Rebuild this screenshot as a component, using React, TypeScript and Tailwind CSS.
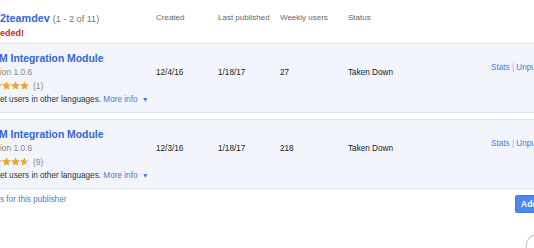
import React from 'react';

type Item = {
  created: string;
  published: string;
  users: string;
  rating: number;
  votes: number;
};

const ITEMS: Item[] = [
  { created: '12/4/16', published: '1/18/17', users: '27', rating: 5, votes: 1 },
  { created: '12/3/16', published: '1/18/17', users: '218', rating: 4.5, votes: 9 },
];

const COLS = 'grid grid-cols-[156px_62px_62px_68px_143px_1fr]';

function Star({ fill }: { fill: number }) {
  const pts = '4.5,0.4 5.7,3.3 8.8,3.5 6.4,5.5 7.2,8.6 4.5,6.9 1.8,8.6 2.6,5.5 0.2,3.5 3.3,3.3';
  return (
    <span className="relative inline-block w-[9px] h-[9px]">
      <svg viewBox="0 0 9 9" className="absolute inset-0 w-[9px] h-[9px]">
        <polygon points={pts} fill="#c9c9c9" />
      </svg>
      <span className="absolute inset-y-0 left-0 overflow-hidden" style={{ width: `${fill * 9}px` }}>
        <svg viewBox="0 0 9 9" className="w-[9px] h-[9px]">
          <polygon points={pts} fill="#f4a21c" />
        </svg>
      </span>
    </span>
  );
}

function Row({ item }: { item: Item }) {
  return (
    <div className={`${COLS} h-[70px] border-y border-[#dbe3f3] bg-[#f2f5fc] text-[8.2px] leading-[12px] text-[#222]`}>
      <div className="pt-[8px] whitespace-nowrap">
        <div className="text-[10.4px] leading-[14px] font-bold text-[#3366d6] -ml-[1px]">M Integration Module</div>
        <div className="text-[8.4px] leading-[13px] text-[#888]">ion 1.0.6</div>
        <div className="flex items-center gap-[4px] h-[13px]">
          <span className="flex -ml-[16px]">
            {[0, 1, 2, 3, 4].map((i) => (
              <Star key={i} fill={Math.max(0, Math.min(1, item.rating - i))} />
            ))}
          </span>
          <span className="text-[8.4px] text-[#888]">({item.votes})</span>
        </div>
        <div className="mt-[1px] leading-[13px] text-[#333]">
          et users in other languages.{' '}
          <span className="text-[#4a78de]">
            More info <span className="text-[7px] ml-[2px]">▼</span>
          </span>
        </div>
      </div>
      <div className="pt-[23px]">{item.created}</div>
      <div className="pt-[23px]">{item.published}</div>
      <div className="pt-[23px]">{item.users}</div>
      <div className="pt-[23px]">Taken Down</div>
      <div className="pt-[18px] whitespace-nowrap text-[#4a78de]">
        Stats <span className="text-[#9bb0e0]">|</span> Unpublish
      </div>
    </div>
  );
}

export default function App() {
  return (
    <div className="relative w-[534px] h-[248px] overflow-hidden bg-white font-['Liberation_Sans',Arial,sans-serif]">
      <div className={`${COLS} h-[43px]`}>
        <div className="pt-[11px] whitespace-nowrap">
          <div className="leading-[12px]">
            <span className="text-[10.8px] font-bold text-[#3366d6]">2teamdev</span>
            <span className="text-[9.1px] text-[#777] ml-[3px]">(1 - 2 of 11)</span>
          </div>
          <div className="mt-[2px] leading-[12px] text-[9px] font-bold text-[#dd2222]">eded!</div>
        </div>
        <div className="pt-[12px] leading-[12px] text-[8px] text-[#666]">Created</div>
        <div className="pt-[12px] leading-[12px] text-[8px] text-[#666] whitespace-nowrap">Last published</div>
        <div className="pt-[12px] leading-[12px] text-[8px] text-[#666] whitespace-nowrap">Weekly users</div>
        <div className="pt-[12px] leading-[12px] text-[8px] text-[#666]">Status</div>
        <div />
      </div>

      <div className="flex flex-col gap-[6px]">
        {ITEMS.map((item, i) => (
          <Row key={i} item={item} />
        ))}
      </div>

      <div className="flex justify-between items-start">
        <div className="pt-[5px] leading-[12px] text-[8.2px] text-[#4a78de] whitespace-nowrap">s for this publisher</div>
        <button className="mt-[6px] h-[18px] w-[40px] -mr-[21px] rounded-[2px] bg-[#4d88f0] border border-[#3f78e0] text-white text-[8.5px] font-bold text-left pl-[5px]">
          Add
        </button>
      </div>

      <svg className="absolute right-0 bottom-0" width="10" height="18" viewBox="0 0 10 18">
        <path d="M2 18 C2 10 5 7 10 5" stroke="#c4c4c4" strokeWidth="1.2" fill="none" />
      </svg>
    </div>
  );
}
